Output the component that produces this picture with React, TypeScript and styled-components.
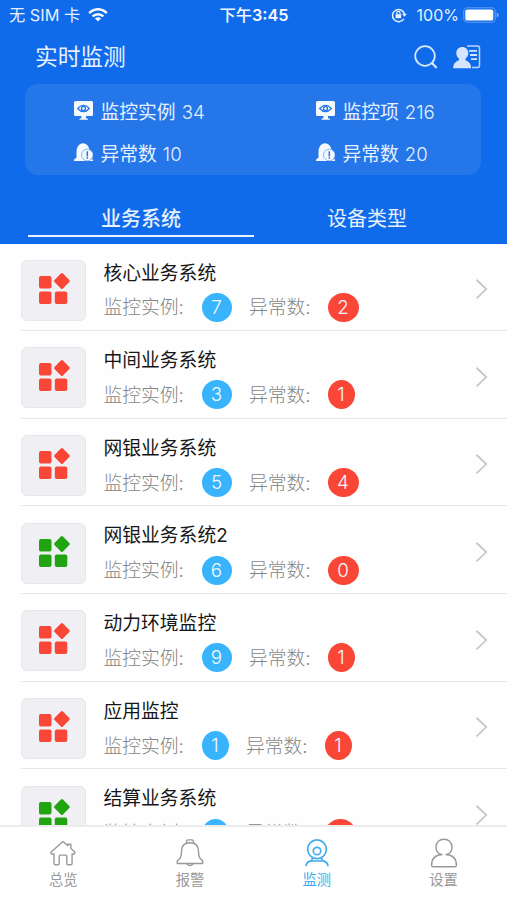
import React from "react";
import styled, { createGlobalStyle } from "styled-components";

const Global = createGlobalStyle`
  * { box-sizing: border-box; }
  body { margin: 0; background: #fff; }
`;

const Screen = styled.div`
  width: 507px;
  height: 900px;
  display: flex;
  flex-direction: column;
  overflow: hidden;
  background: #fefefe;
  font-family: Inter, "Noto Sans CJK SC", sans-serif;
`;

const Header = styled.header`
  height: 243.5px;
  flex: none;
  background: #106bea;
  color: #e6f0ff;
`;

const StatusBar = styled.div`
  height: 30px;
  display: grid;
  grid-template-columns: 1fr auto 1fr;
  align-items: center;
  padding: 0 8px 0 9px;
  font-size: 16.3px;
  line-height: 30px;
`;

const StatusSide = styled.div<{ $end?: boolean }>`
  display: flex;
  align-items: center;
  justify-content: ${(p) => (p.$end ? "flex-end" : "flex-start")};
  gap: ${(p) => (p.$end ? "0" : "8px")};
  white-space: nowrap;
`;

const Percent = styled.span`
  margin: 0 4px 0 10px;
  font-size: 16px;
`;

const Clock = styled.div`
  display: flex;
  font-weight: 500;
  font-size: 16.3px;
  color: #f3f8ff;
`;

const ClockDigits = styled.span`
  font-weight: 600;
`;

const TitleBar = styled.div`
  height: 54px;
  display: flex;
  align-items: center;
  padding: 0 26px 0 35px;
`;

const Title = styled.h1`
  flex: 1;
  margin: 0;
  font-size: 22.7px;
  font-weight: 400;
  line-height: 30px;
`;

const Actions = styled.div`
  display: flex;
  align-items: center;
  gap: 15px;
`;

const Summary = styled.section`
  height: 91px;
  margin: 0 26px 0 25px;
  padding: 7px 0 0 49px;
  border-radius: 13px;
  background: #2577e9;
  display: grid;
  grid-template-columns: 242px 1fr;
  grid-template-rows: 42px 42px;
`;

const Stat = styled.div`
  display: flex;
  align-items: center;
  gap: 7.5px;
  height: 40px;
  font-size: 18.8px;
  line-height: 40px;
  white-space: nowrap;
  svg { margin-bottom: 1px; }
`;

const StatText = styled.span`
  padding-top: 3px;
`;

const StatNumber = styled.span`
  font-size: 18.6px;
  font-weight: 350;
  margin-left: 6px;
`;

const Tabs = styled.nav`
  height: 69px;
  display: grid;
  grid-template-columns: 226px 226px;
  padding-left: 28px;
`;

const Tab = styled.div<{ $active?: boolean }>`
  display: flex;
  justify-content: center;
  height: 61.5px;
  padding-top: 29px;
  font-size: 20px;
  line-height: 30px;
  font-weight: ${(p) => (p.$active ? 500 : 400)};
  border-bottom: 2px solid ${(p) => (p.$active ? "#e8f1ff" : "transparent")};
`;

const List = styled.main`
  flex: 1;
  min-height: 0;
  overflow: hidden;
`;

const Row = styled.article`
  display: flex;
  height: 87.65px;
  margin-left: 21px;
  border-bottom: 1.500px solid #e6e6e8;
`;

const Tile = styled.div`
  width: 65px;
  height: 61px;
  margin-top: 16.2px;
  border: 1px solid #e6e6eb;
  border-radius: 6px;
  background: #f0eff4;
`;

const Info = styled.div`
  flex: 1;
  padding: 16px 0 0 17.500px;
`;

const Name = styled.h2`
  margin: 0;
  font-size: 18.8px;
  font-weight: 400;
  line-height: 28px;
  color: #161616;
`;

const Metrics = styled.div`
  display: flex;
  align-items: center;
  height: 29px;
  margin-top: 5.300px;
  font-size: 18.8px;
  font-weight: 300;
  line-height: 29px;
  color: #858585;
`;

const Label = styled.span<{ $wide?: boolean }>`
  width: ${(p) => (p.$wide ? 98 : 78.5)}px;
  padding-top: 1px;
  white-space: nowrap;
`;

const Badge = styled.span<{ $alert?: boolean; $narrow?: boolean }>`
  width: ${(p) => (p.$narrow ? 27 : p.$alert ? 31 : 30)}px;
  height: 29px;
  margin-right: ${(p) => (p.$alert ? 0 : 17.5)}px;
  border-radius: 50%;
  background: ${(p) => (p.$alert ? "#fa4636" : "#37b4fc")};
  color: #f4f8ff;
  font-size: 18.8px;
  line-height: 29px;
  text-align: center;
`;

const Arrow = styled.div`
  width: 32px;
  padding-top: 33.500px;
`;

const TabBar = styled.footer`
  flex: none;
  height: 75.5px;
  border-top: 2.5px solid #ececec;
  display: grid;
  grid-template-columns: repeat(4, 1fr);
  background: #fff;
`;

const TabItem = styled.div<{ $active?: boolean }>`
  display: flex;
  flex-direction: column;
  align-items: center;
  padding-top: 10px;
  font-size: 14.3px;
  line-height: 20px;
  color: ${(p) => (p.$active ? "#43acf0" : "#999")};
  svg { display: block; margin-bottom: 1px; }
`;

const Wifi = () => (
  <svg width="20" height="14" viewBox="0 0 20 14" fill="none" stroke="#f3f8ff" strokeWidth="2.5">
    <path d="M1.2 5.2C6.2-.1 13.8-.1 18.8 5.2M4.6 8.4c3.1-3 7.7-3 10.8 0" />
    <path d="M10 13.5 6.9 10.4c1.8-1.7 4.4-1.7 6.2 0Z" fill="#f3f8ff" stroke="none" />
  </svg>
);

const RotationLock = () => (
  <svg width="16" height="16" viewBox="0 0 16 16" fill="none" stroke="#e6f0ff" strokeWidth="1.5">
    <path d="M12.8 11.8A6.1 6.1 0 1 1 13.5 7" />
    <path d="m11 6.7 4.8.1-2.4 3Z" fill="#e6f0ff" stroke="none" />
    <path d="M4.600 7.200h5.600v4H4.600z" fill="#e6f0ff" stroke="none" />
    <path d="M5.800 7.500V6a1.600 1.600 0 0 1 3.200 0v1.500" strokeWidth="1.200" />
  </svg>
);

const Battery = () => (
  <svg width="36" height="16" viewBox="0 0 36 16">
    <rect x=".7" y=".7" width="31.6" height="14.6" rx="4" fill="none" stroke="#5f9bf1" strokeWidth="1.1" />
    <rect x="2.3" y="2.4" width="28" height="11.2" rx="2.2" fill="#fff" />
    <path d="M33.7 5.4q2 .6 2 2.6t-2 2.6Z" fill="#79acf4" />
  </svg>
);

const Search = () => (
  <svg width="24" height="24" viewBox="0 0 24 24" fill="none" stroke="#d7e7ff" strokeWidth="1.8">
    <circle cx="11" cy="11" r="9.8" />
    <path d="m18 18 4.700 5" strokeWidth="2.200" />
  </svg>
);

const Contact = () => (
  <svg width="28" height="24" viewBox="0 0 28 24">
    <path d="M14 1h10.500q2 0 2 2v17.500q0 2-2 2H19" fill="none" stroke="#bcd5fb" strokeWidth="1.500" />
    <path d="M16 5.800h8M17 10h7M18 14.200h6" stroke="#d5e4ff" strokeWidth="1.800" />
    <path d="M9.300 2C5.700 2 3.300 4.600 3.300 8.100c0 2.500 1 4.400 2.700 5.500v1.600C2 16.700.3 19.200.2 23.200h18c-.1-4-1.900-6.500-5.700-8v-1.600c1.700-1.100 2.800-3 2.800-5.500C15.300 4.600 12.900 2 9.300 2Z" fill="#d5e4ff" />
  </svg>
);

const Monitor = () => (
  <svg width="19" height="19" viewBox="0 0 19 19">
    <path d="M1.500 0h16Q19 0 19 1.500v12q0 1.500-1.500 1.500H12v2l2 1v.7H5.400V18l2-1v-2H1.500Q0 15 0 13.500v-12Q0 0 1.500 0Z" fill="#f4f8ff" />
    <path d="M3.700 7.500Q9.500 1 15.300 7.500 9.500 14 3.700 7.500Z" fill="none" stroke="#2577e9" strokeWidth="1.200" />
    <circle cx="9.500" cy="7.500" r="2" fill="#fff" stroke="#2577e9" strokeWidth="1.300" />
  </svg>
);

const Alarm = () => (
  <svg width="19" height="19" viewBox="0 0 19 19">
    <path d="M2.500 15.800V9C2.500 3.800 5 .300 9 .300S15.600 3.800 15.600 9v6.800Z" fill="#f4f8ff" />
    <path d="M0 16.200h19v1.900H0zM1.300 15h11v3h-11z" fill="#f4f8ff" />
    <circle cx="13.300" cy="12" r="5.800" fill="#f4f8ff" stroke="#71a7f2" strokeWidth=".8" />
    <path d="M13.300 8.200v5.200M13.300 14.300v1.400" stroke="#2577e9" strokeWidth="1.500" />
  </svg>
);

const Blocks = ({ color }: { color: string }) => (
  <svg width="63" height="59" viewBox="0 0 63 59" fill={color}>
    <rect x="17" y="15" width="12.500" height="12.500" rx="2" />
    <rect x="17" y="30.500" width="12.500" height="12.500" rx="2" />
    <rect x="32.800" y="30.500" width="12.500" height="12.500" rx="2" />
    <rect x="33.900" y="14" width="12" height="12" rx="1.500" transform="rotate(45 39.900 20)" />
  </svg>
);

const Chevron = () => (
  <svg width="14" height="24" viewBox="0 0 14 24" fill="none" stroke="#c9c9cc" strokeWidth="1.900">
    <path d="m1.500 2.800 9.700 9.300-9.700 9.300" />
  </svg>
);

const icon = { width: 30, height: 32, viewBox: "0 0 30 32", fill: "none", stroke: "currentColor", strokeWidth: 1.4 };

const Home = () => (
  <svg {...icon} strokeLinejoin="round" strokeLinecap="round">
    <path d="m3.500 17-.6-1.700L15 4.500l4.800 4.200V7.300h3v4L27 15.200l-.7 1.800h-2.200v9.200q0 1.500-1.500 1.500h-2.400q-1.400 0-1.400-1.500v-7q0-1.100-1.200-1.100h-5.200q-1.200 0-1.200 1.100v7q0 1.500-1.400 1.500H7.500Q6 27.700 6 26.200V17Z" />
  </svg>
);

const Bell = () => (
  <svg {...icon} strokeLinejoin="round">
    <path d="M11.500 6.300V4.600q0-1.700 1.700-1.700h3.600q1.700 0 1.700 1.700v1.700" />
    <path d="M6.500 14.500C6.500 9 9.400 5.800 15 5.800s8.500 3.200 8.500 8.700c0 5.500 1.300 7 4.200 9.300v2.700H2.300v-2.700c2.900-2.300 4.200-3.800 4.200-9.300Z" />
    <path d="M11.700 26.700q3.300 3.500 6.600 0" />
  </svg>
);

const Camera = () => (
  <svg {...icon} strokeWidth={1.7}>
    <circle cx="15" cy="12.200" r="9.400" />
    <circle cx="15" cy="14" r="3.700" />
    <path d="M10.300 20.800 9.700 24h10.600l-.6-3.200M9.900 23.700C6.100 24.400 4 26.300 4 29.300M20.100 23.700c3.800.7 5.900 2.600 5.900 5.600" />
  </svg>
);

const Person = () => (
  <svg {...icon}>
    <path d="M12.300 17.500C8.900 16.600 7 13.900 7 10.300 7 5.600 10.200 2.300 15 2.300s8 3.300 8 8c0 3.600-1.900 6.300-5.300 7.200" />
    <path d="M13.500 17.500C6.300 17.800 2.700 21.500 2.500 28q0 1.700 1.700 1.700h21.600q1.700 0 1.700-1.700c-.2-6.500-3.800-10.200-11-10.500" />
  </svg>
);

const stats = [
  { icon: <Monitor />, label: "监控实例", value: 34 },
  { icon: <Monitor />, label: "监控项", value: 216 },
  { icon: <Alarm />, label: "异常数", value: 10 },
  { icon: <Alarm />, label: "异常数", value: 20 },
];

const systems = [
  { name: "核心业务系统", count: 7, faults: 2 },
  { name: "中间业务系统", count: 3, faults: 1 },
  { name: "网银业务系统", count: 5, faults: 4 },
  { name: "网银业务系统2", count: 6, faults: 0, healthy: true },
  { name: "动力环境监控", count: 9, faults: 1 },
  { name: "应用监控", count: 1, faults: 1 },
  { name: "结算业务系统", count: 1, faults: 0, healthy: true },
];

const tabs = [
  { label: "总览", icon: <Home /> },
  { label: "报警", icon: <Bell /> },
  { label: "监测", icon: <Camera />, active: true },
  { label: "设置", icon: <Person /> },
];

export default function App() {
  return (
    <Screen>
      <Global />
      <Header>
        <StatusBar>
          <StatusSide><span>无 SIM 卡</span><Wifi /></StatusSide>
          <Clock>下午<ClockDigits>3:45</ClockDigits></Clock>
          <StatusSide $end><RotationLock /><Percent>100%</Percent><Battery /></StatusSide>
        </StatusBar>
        <TitleBar>
          <Title>实时监测</Title>
          <Actions><Search /><Contact /></Actions>
        </TitleBar>
        <Summary>
          {stats.map((s, i) => (
            <Stat key={i}>{s.icon}<StatText>{s.label}<StatNumber>{s.value}</StatNumber></StatText></Stat>
          ))}
        </Summary>
        <Tabs>
          <Tab $active>业务系统</Tab>
          <Tab>设备类型</Tab>
        </Tabs>
      </Header>
      <List>
        {systems.map((s) => (
          <Row key={s.name}>
            <Tile><Blocks color={s.healthy ? "#20a511" : "#fa4636"} /></Tile>
            <Info>
              <Name>{s.name}</Name>
              <Metrics>
                <Label $wide>监控实例:</Label>
                <Badge $narrow={s.count === 1}>{s.count}</Badge>
                <Label>异常数:</Label>
                <Badge $alert $narrow={s.faults === 1}>{s.faults}</Badge>
              </Metrics>
            </Info>
            <Arrow><Chevron /></Arrow>
          </Row>
        ))}
      </List>
      <TabBar>
        {tabs.map((t) => (
          <TabItem key={t.label} $active={t.active}>{t.icon}{t.label}</TabItem>
        ))}
      </TabBar>
    </Screen>
  );
}
